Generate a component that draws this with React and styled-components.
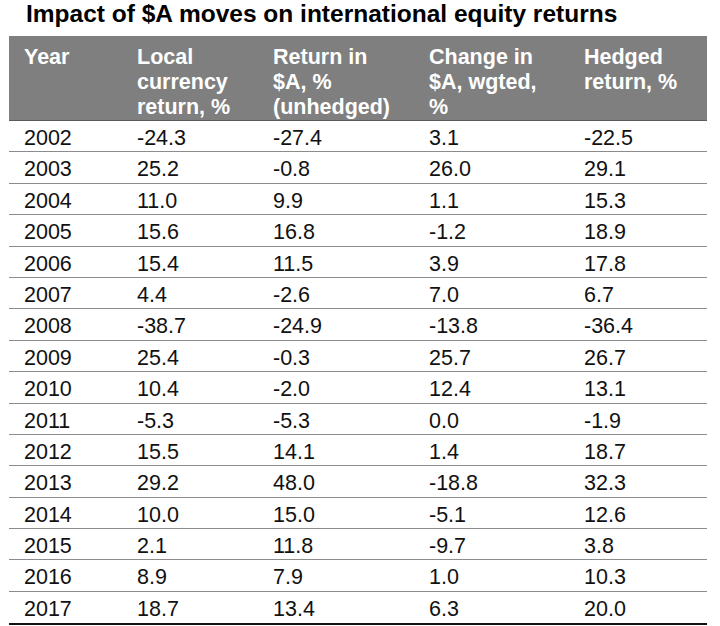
import React from 'react';
import styled, { createGlobalStyle } from 'styled-components';

const GlobalStyle = createGlobalStyle`
  html, body {
    margin: 0;
    padding: 0;
    background: #fff;
  }
  body {
    font-family: "Liberation Sans", Arial, sans-serif;
    color: #000;
  }
`;

const Page = styled.div`
  width: 720px;
  height: 626px;
  padding: 1px 0 0 9px;
  box-sizing: border-box;
  overflow: hidden;
`;

const Title = styled.h1`
  margin: 0;
  padding-left: 17px;
  font-size: 24.5px;
  line-height: 26px;
  font-weight: bold;
  color: #000;
  height: 35px;
`;

const Table = styled.div`
  width: 698px;
  border-bottom: 2px solid #111;
`;

const cols = '113px 136px 156px 155px 138px';

const HeadRow = styled.div`
  display: grid;
  grid-template-columns: ${cols};
  background: #7f7f7f;
  border-bottom: 1px solid #5a5a5a;
  padding: 9px 0 0;
  height: 85px;
  box-sizing: border-box;
`;

const HeadCell = styled.div`
  padding-left: 15px;
  color: #fff;
  font-weight: bold;
  font-size: 21.5px;
  line-height: 25px;
`;

const Row = styled.div`
  display: grid;
  grid-template-columns: ${cols};
  height: 31.4px;
  box-sizing: border-box;
  border-bottom: ${(p) => (p.$last ? 'none' : '1px solid #8c8c8c')};
`;

const Cell = styled.div`
  padding: 3px 0 0 15px;
  font-size: 21.5px;
  line-height: 28px;
  color: #111;
`;

const headers = [
  ['Year'],
  ['Local', 'currency', 'return, %'],
  ['Return in', '$A, %', '(unhedged)'],
  ['Change in', '$A, wgted,', '%'],
  ['Hedged', 'return, %'],
];

const data = [
  ['2002', '-24.3', '-27.4', '3.1', '-22.5'],
  ['2003', '25.2', '-0.8', '26.0', '29.1'],
  ['2004', '11.0', '9.9', '1.1', '15.3'],
  ['2005', '15.6', '16.8', '-1.2', '18.9'],
  ['2006', '15.4', '11.5', '3.9', '17.8'],
  ['2007', '4.4', '-2.6', '7.0', '6.7'],
  ['2008', '-38.7', '-24.9', '-13.8', '-36.4'],
  ['2009', '25.4', '-0.3', '25.7', '26.7'],
  ['2010', '10.4', '-2.0', '12.4', '13.1'],
  ['2011', '-5.3', '-5.3', '0.0', '-1.9'],
  ['2012', '15.5', '14.1', '1.4', '18.7'],
  ['2013', '29.2', '48.0', '-18.8', '32.3'],
  ['2014', '10.0', '15.0', '-5.1', '12.6'],
  ['2015', '2.1', '11.8', '-9.7', '3.8'],
  ['2016', '8.9', '7.9', '1.0', '10.3'],
  ['2017', '18.7', '13.4', '6.3', '20.0'],
];

export default function App() {
  return (
    <Page>
      <GlobalStyle />
      <Title>Impact of $A moves on international equity returns</Title>
      <Table>
        <HeadRow>
          {headers.map((lines, i) => (
            <HeadCell key={i}>
              {lines.map((l, j) => (
                <div key={j}>{l}</div>
              ))}
            </HeadCell>
          ))}
        </HeadRow>
        {data.map((row, i) => (
          <Row key={row[0]} $last={i === data.length - 1}>
            {row.map((v, j) => (
              <Cell key={j}>{v}</Cell>
            ))}
          </Row>
        ))}
      </Table>
    </Page>
  );
}
